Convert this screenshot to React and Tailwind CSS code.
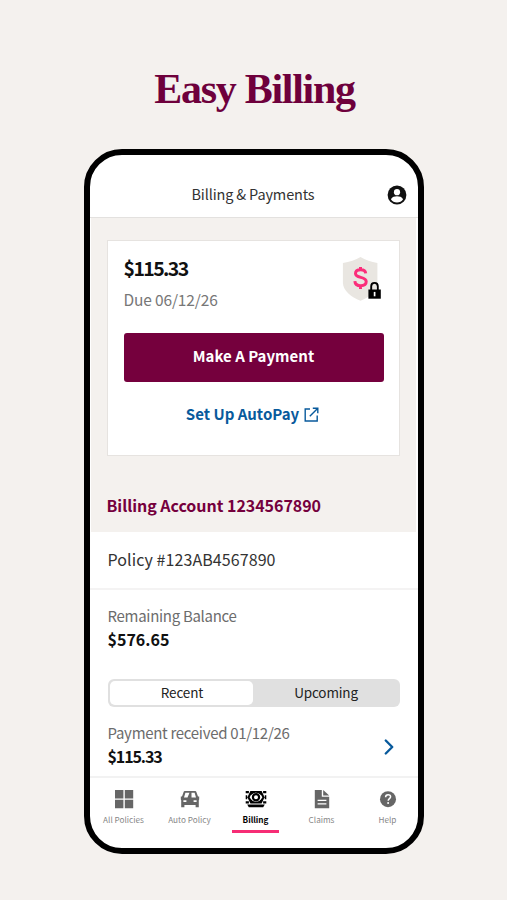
import { ChevronRight } from "lucide-react";

const tabs = [
    { name: "All Policies", icon: GridIcon },
    { name: "Auto Policy", icon: CarIcon },
    { name: "Billing", icon: MoneyIcon, active: true },
    { name: "Claims", icon: DocIcon },
    { name: "Help", icon: HelpIcon },
];

function GridIcon() {
    return (
        <svg width="20" height="20" viewBox="0 0 20 20" fill="currentColor">
            <path d="M1 1h8.4v8.4H1zM10.8 1h8.4v8.4h-8.4zM1 10.8h8.4v8.4H1zM10.8 10.8h8.4v8.4h-8.4z" />
        </svg>
    );
}

function CarIcon() {
    return (
        <svg width="20" height="20" viewBox="0 0 20 20" fill="currentColor">
            <path
                fillRule="evenodd"
                d="M4.8 2h10.4q.8 0 1.1.8l1.7 4.8h1.2v3l-.4.4v7.2h-3.2v-2.2H4.4v2.2H1.2V11L.8 10.6v-3H2l1.7-4.8q.3-.8 1.1-.8zM5.4 3.8 4 8.600h3.500l2-4.800zM11.500 3.800v4.800h4.500l-1.400-4.800zM3.4 11.2v1.8h3v-1.8zM13.6 11.2v1.8h3v-1.8z"
            />
        </svg>
    );
}

function MoneyIcon() {
    return (
        <svg width="22" height="20" viewBox="0 0 22 20" fill="currentColor">
            <path d="M.7 2h3.200v2.300H.7zM18.100 2h3.200v2.300h-3.200zM.7 12.300h3.200v2.300H.7zM18.100 12.300h3.200v2.300h-3.200zM.7 6.300h1.500v4H.7zM19.800 6.300h1.500v4h-1.500z" />
            <path d="M5.400 2h11.200l3 6.300-3 6.300H5.400l-3-6.300z" />
            <path d="M4.600 8.300C6.300 5.300 8.500 3.800 11 3.800s4.700 1.500 6.400 4.500c-1.700 3-3.900 4.500-6.400 4.500s-4.700-1.500-6.400-4.500z" fill="#fff" />
            <circle cx="11" cy="8.3" r="3.100" fill="none" stroke="currentColor" strokeWidth="2.200" />
            <path d="M2.200 15.500h17.600l-1.600 2.700H3.800z" />
        </svg>
    );
}

function DocIcon() {
    return (
        <svg width="20" height="20" viewBox="0 0 20 20">
            <path d="M2.8 1h7v6.8h7.4v11.4H2.8z" fill="currentColor" />
            <path d="M11.2 1l6 5.5h-6z" fill="currentColor" />
            <path d="M5.6 11.3h8.8M5.6 14.8h8.8" stroke="#fff" strokeWidth="1.3" />
        </svg>
    );
}

function HelpIcon() {
    return (
        <svg width="20" height="20" viewBox="0 0 20 20">
            <circle cx="10" cy="10.200" r="8" fill="currentColor" />
            <path d="M7.6 8.2c0-3.4 5-3.2 5-.4 0 1.9-2.4 1.9-2.4 4" fill="none" stroke="#fff" strokeWidth="1.5" />
            <circle cx="10.1" cy="14" r="1" fill="#fff" />
        </svg>
    );
}

function UserIcon() {
    return (
        <svg width="20" height="20" viewBox="0 0 20 20">
            <circle cx="10" cy="10" r="9.4" fill="#111" />
            <circle cx="10" cy="7.2" r="3.1" fill="#fff" />
            <path d="M3.9 14.2c1.3-2.4 3.7-3 6.1-3s4.8.6 6.1 3A7.4 7.4 0 0 1 10 17.4a7.4 7.4 0 0 1-6.1-3.2z" fill="#fff" />
        </svg>
    );
}

function ShieldIcon() {
    return (
        <svg width="41" height="46" viewBox="0 0 41 46" fill="none">
            <path d="M18.5 1Q26 5.500 35.400 7v19.500c0 8-7.400 14.500-16.900 18.200C9 41 .9 34.500.9 26.500V7Q11 5.500 18.500 1z" fill="#e9e6e1" />
            <path
                d="M23.700 17.400c-.2-2.500-2.400-3.700-5-3.700-3 0-5.200 1.400-5.200 3.800 0 5.200 10.700 2.500 10.700 8 0 2.700-2.300 4.200-5.500 4.200-3.300 0-5.700-1.600-5.800-4.600M18.500 11v2.500M18.500 30v3"
                stroke="#fb2d7a"
                strokeWidth="3"
            />
            <path d="M29.200 34.500v-4.200c0-4.600 6.600-4.600 6.600 0v4.200" stroke="#000" strokeWidth="1.900" />
            <path d="M26.400 33.500h12.400v9.200H26.400z" fill="#000" />
            <path d="M32.600 35.900v4.400" stroke="#fff" strokeWidth="1.700" />
        </svg>
    );
}

function ExternalIcon() {
    return (
        <svg width="15" height="15" viewBox="0 0 15 15" fill="none" stroke="currentColor" strokeWidth="1.400">
            <path d="M6 2H1.200v12h12V8.500M5.800 9.300 13.300 1.700M8.800 1.200h5v5" />
        </svg>
    );
}

export default function App() {
    return (
        <div className="flex h-[900px] w-[507px] flex-col items-center overflow-hidden bg-[#f4f1ee] font-['Noto_Sans_CJK_SC','Noto_Sans',sans-serif] whitespace-nowrap">

            {/* TITLE */}
            <h1 className="mt-[65px] h-[84px] pl-[2px] font-['Liberation_Serif',serif] text-[42px] leading-[48px] font-bold tracking-[-1.300px] text-[#6e003c]">
                Easy Billing
            </h1>

            {/* PHONE */}
            <div className="flex h-[705px] w-[340px] flex-col overflow-hidden rounded-[38px] border-[6px] border-black bg-white">

                {/* HEADER */}
                <div className="flex h-[63px] shrink-0 items-end justify-end border-b border-[#e3e1df] pr-[11px] pb-[12px]">
                    <span className="mr-[72px] text-[14.500px] leading-[22px] tracking-[-0.150px] text-[#333]">Billing &amp; Payments</span>
                    <UserIcon />
                </div>

                {/* BALANCE */}
                <div className="mr-[2px] ml-[1px] flex h-[314px] shrink-0 flex-col bg-[#f4f1ee] px-4 pt-[22px]">
                    <div className="h-[216px] w-[293px] border border-[#e6e3e0] bg-white px-[16px] pt-[13px]">
                        <div className="flex h-[79px] justify-between">
                            <div>
                                <div className="text-[19.500px] leading-[27px] font-bold tracking-[-1.600px] text-[#111]">$115.33</div>
                                <div className="mt-[7px] text-[15.500px] leading-[22px] tracking-[-0.150px] text-[#777]">Due 06/12/26</div>
                            </div>
                            <div className="mt-[2px]"><ShieldIcon /></div>
                        </div>
                        <button className="flex h-[49px] w-[260px] items-center justify-center rounded-[3px] bg-[#75003d] pb-[2px] text-[15px] font-bold text-white">
                            Make A Payment
                        </button>
                        <a className="mt-[21px] flex h-[22px] items-center justify-center gap-[5px] pr-[1px] text-[15px] font-bold text-[#085a9c]">
                            Set Up AutoPay
                            <ExternalIcon />
                        </a>
                    </div>
                    <h2 className="mt-[37px] text-[16px] leading-6 font-bold tracking-[-0.040px] text-[#75003d]">Billing Account 1234567890</h2>
                </div>

                {/* POLICY */}
                <div className="h-[58px] shrink-0 border-b-2 border-[#f4f3f3] pt-[15px] pl-[18px] text-[16px] leading-6 tracking-[0.080px] text-[#333]">
                    Policy #123AB4567890
                </div>

                <div className="h-[89px] shrink-0 pt-[14px] pl-[18px]">
                    <div className="text-[15px] leading-6 tracking-[-0.300px] text-[#6c6c6c]">Remaining Balance</div>
                    <div className="-mt-px text-[16px] leading-6 font-bold text-[#111]">$576.65</div>
                </div>

                <div className="ml-[18px] flex h-[28px] w-[292px] shrink-0 rounded-[6px] bg-[#e0e0e0] p-[2px] text-[13.500px] leading-[22px] tracking-[-0.150px] text-[#222]">
                    <div className="w-[143px] rounded-[5px] bg-white pl-[2px] text-center">Recent</div>
                    <div className="flex-1 pl-[2px] text-center">Upcoming</div>
                </div>

                {/* LAST PAYMENT */}
                <div className="flex h-[69px] shrink-0 items-start justify-between pt-[14px] pr-[17px] pl-[18px]">
                    <div>
                        <div className="text-[15px] leading-6 tracking-[-0.300px] text-[#6c6c6c]">Payment received 01/12/26</div>
                        <div className="-mt-px text-[16px] leading-6 font-bold tracking-[-1.100px] text-[#111]">$115.33</div>
                    </div>
                    <ChevronRight size={26} strokeWidth={2.200} className="mt-[13px] -mr-px text-[#085a9c]" />
                </div>

                {/* TAB BAR */}
                <div className="flex flex-1 border-t-2 border-[#f2f2f2] pt-[11px] pl-[1px]">
                    {tabs.map(({ name, icon: Icon, active }) => (
                        <div
                            key={name}
                            className={`flex w-[66px] shrink-0 flex-col items-center ${active ? "font-bold text-black" : "text-[#666]"}`}
                        >
                            <Icon />
                            <span className={`mt-[4px] text-[8.200px] leading-[12px] ${active ? "" : "text-[#888]"}`}>{name}</span>
                            {active && <div className="mt-[5px] h-[3px] w-[47px] bg-[#f62d75]" />}
                        </div>
                    ))}
                </div>
            </div>
        </div>
    );
}
